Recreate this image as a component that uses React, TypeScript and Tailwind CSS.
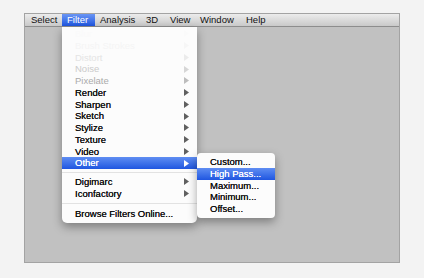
import React from "react";

const font = { fontFamily: '"Liberation Sans", Arial, sans-serif' };

function Arrow({ white, faint }: { white?: boolean; faint?: string }) {
  return (
    <svg width="5" height="7" viewBox="0 0 5 7" className="shrink-0">
      <path d="M0 0 L5 3.5 L0 7 Z" fill={white ? "#ffffff" : faint ?? "#606060"} />
    </svg>
  );
}

type Row = { label: string; color?: string; arrow?: boolean; hi?: boolean; arrowColor?: string };

function MenuRow({ r }: { r: Row }) {
  return (
    <div
      className={
        "flex h-[11.75px] items-center justify-between pl-[13px] pr-[8px] " +
        (r.hi ? "bg-gradient-to-b from-[#5f8df2] to-[#1f55e0] text-white" : "")
      }
    >
      <span
        style={{ color: r.hi ? "#fff" : r.color ?? "#111", textShadow: r.color ? undefined : "0 0 0.4px currentColor" }}
        className="leading-none"
      >
        {r.label}
      </span>
      {r.arrow && <Arrow white={r.hi} faint={r.arrowColor} />}
    </div>
  );
}

function Sep({ h }: { h: string }) {
  return (
    <div className={"flex items-center " + h}>
      <div className="h-px w-full bg-[#e2e2e2]" />
    </div>
  );
}

export default function App() {
  const top: Row[] = [
    { label: "Blur", color: "#fafafa", arrow: true, arrowColor: "#fafafa" },
    { label: "Brush Strokes", color: "#f5f5f5", arrow: true, arrowColor: "#f6f6f6" },
    { label: "Distort", color: "#e4e4e4", arrow: true, arrowColor: "#ebebeb" },
    { label: "Noise", color: "#cbcbcb", arrow: true, arrowColor: "#d6d6d6" },
    { label: "Pixelate", color: "#ababab", arrow: true, arrowColor: "#bdbdbd" },
    { label: "Render", arrow: true },
    { label: "Sharpen", arrow: true },
    { label: "Sketch", arrow: true },
    { label: "Stylize", arrow: true },
    { label: "Texture", arrow: true },
    { label: "Video", arrow: true },
    { label: "Other", arrow: true, hi: true },
  ];
  const mid: Row[] = [
    { label: "Digimarc", arrow: true },
    { label: "Iconfactory", arrow: true },
  ];
  const sub: Row[] = [
    { label: "Custom..." },
    { label: "High Pass...", hi: true },
    { label: "Maximum..." },
    { label: "Minimum..." },
    { label: "Offset..." },
  ];
  return (
    <div
      className="h-[278px] w-[424px] overflow-hidden bg-[#f3f3f3] pl-[24px] pt-[13px] text-[9.5px]"
      style={font}
    >
      <div className="relative flex h-[250px] w-[376px] flex-col border border-[#a3a3a3] bg-[#c1c1c1]">
        {/* menu bar */}
        <div className="flex h-[13px] shrink-0 items-center border-b border-[#8d8d8d] bg-gradient-to-b from-[#ececec] to-[#c9c9c9] text-[#111]">
          <div className="flex h-full w-[37px] items-center pl-[6px]">Select</div>
          <div className="flex h-full w-[33px] items-center bg-gradient-to-b from-[#6a95f4] to-[#1f55e0] pl-[5px] text-white">
            Filter
          </div>
          <div className="flex h-full w-[46px] items-center pl-[5px]">Analysis</div>
          <div className="flex h-full w-[24px] items-center pl-[5px]">3D</div>
          <div className="flex h-full w-[30px] items-center pl-[5px]">View</div>
          <div className="flex h-full w-[46px] items-center pl-[5px]">Window</div>
          <div className="flex h-full items-center pl-[5px]">Help</div>
        </div>

        {/* Filter dropdown */}
        <div className="absolute left-[37px] top-[13px] w-[135px] rounded-b-[5px] bg-[#fcfcfc] pb-[3px] pt-[1px] shadow-[0_4px_10px_rgba(0,0,0,0.35)]">
          {top.map((r) => (
            <MenuRow key={r.label} r={r} />
          ))}
          <Sep h="h-[6.75px]" />
          {mid.map((r) => (
            <MenuRow key={r.label} r={r} />
          ))}
          <Sep h="h-[8.5px]" />
          <MenuRow r={{ label: "Browse Filters Online..." }} />
        </div>

        {/* Other submenu */}
        <div className="absolute left-[172px] top-[139px] w-[78px] rounded-[4px] bg-[#fcfcfc] py-[3px] shadow-[0_4px_10px_rgba(0,0,0,0.35)]">
          {sub.map((r) => (
            <MenuRow key={r.label} r={r} />
          ))}
        </div>
      </div>
    </div>
  );
}
